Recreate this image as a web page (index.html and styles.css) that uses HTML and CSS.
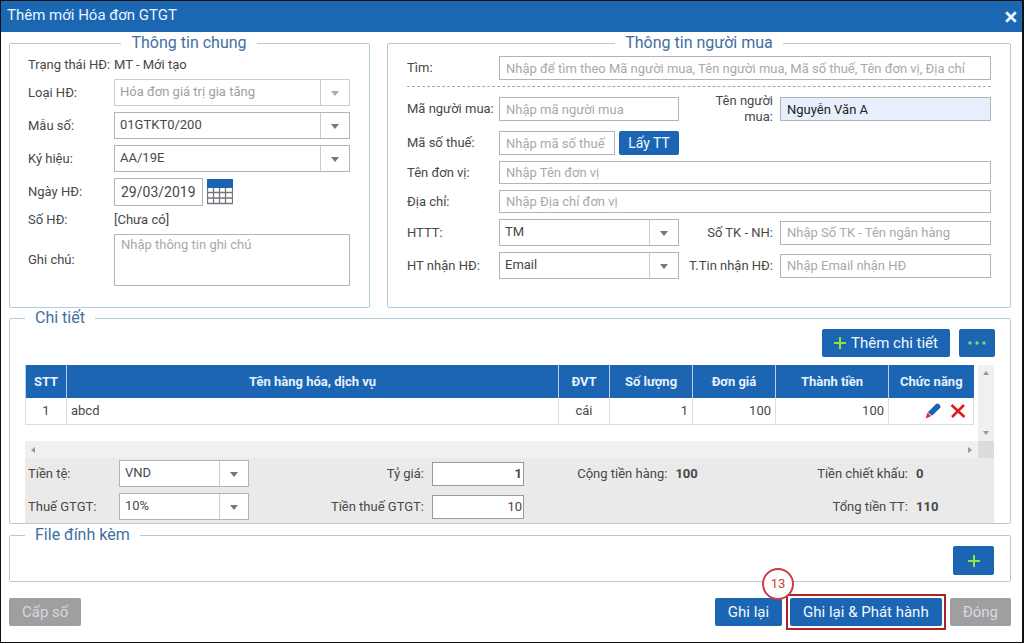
FILE: index.html
```html
<!DOCTYPE html>
<html lang="vi">
<head>
<meta charset="utf-8">
<meta name="viewport" content="width=device-width, initial-scale=1">
<title>Thêm mới Hóa đơn GTGT</title>
<link rel="stylesheet" href="styles.css">
</head>
<body>
<main class="dialog">
  <header class="titlebar">
    <h1 class="title">Thêm mới Hóa đơn GTGT</h1>
    <button class="close" type="button" aria-label="Đóng cửa sổ">
      <svg width="12" height="12" viewBox="0 0 12 12"><path d="M1.200 1.200L10.800 10.800M10.800 1.200L1.200 10.800" stroke="currentColor" stroke-width="2.800"/></svg>
    </button>
  </header>

  <form class="content">
    <div class="panels">
      <fieldset class="panel general">
        <legend class="legend centered">Thông tin chung</legend>
        <div class="general-grid">
          <span class="status">Trạng thái HĐ:</span><span class="status">MT - Mới tạo</span>
          <label for="kind">Loại HĐ:</label>
          <div class="combo"><select id="kind" disabled><option>Hóa đơn giá trị gia tăng</option></select></div>
          <label for="template">Mẫu số:</label>
          <div class="combo"><select id="template"><option>01GTKT0/200</option></select></div>
          <label for="serial">Ký hiệu:</label>
          <div class="combo"><select id="serial"><option>AA/19E</option></select></div>
          <label for="date">Ngày HĐ:</label>
          <div class="date-row">
            <input class="field date" id="date" type="text" value="29/03/2019">
            <button class="icon-button" type="button" aria-label="Chọn ngày">
              <svg width="26" height="26" viewBox="0 0 26 26"><path fill="#fff" d="M.5 .5h25v24H.5z"/><path d="M.5 8v16.500h25V8M6.500 8v16.500M12.500 8v16.500M18.500 8v16.500M0 13.500h26M0 19h26" fill="none" stroke="#75757f" stroke-width="1.300"/><path fill="#1b65b0" d="M0 0h26v9H0z"/></svg>
            </button>
          </div>
          <span>Số HĐ:</span><span>[Chưa có]</span>
          <label for="note">Ghi chú:</label>
          <textarea class="field note" id="note" placeholder="Nhập thông tin ghi chú"></textarea>
        </div>
      </fieldset>

      <fieldset class="panel buyer">
        <legend class="legend centered">Thông tin người mua</legend>
        <div class="buyer-grid">
          <label for="search">Tìm:</label>
          <input class="field wide" id="search" type="text" placeholder="Nhập để tìm theo Mã người mua, Tên người mua, Mã số thuế, Tên đơn vị, Địa chỉ">
          <div class="divider"></div>
          <label for="code">Mã người mua:</label>
          <input class="field" id="code" type="text" placeholder="Nhập mã người mua">
          <label class="end wrap" for="name">Tên người mua:</label>
          <input class="field filled" id="name" type="text" value="Nguyễn Văn A">
          <label for="tax">Mã số thuế:</label>
          <div class="tax-row">
            <input class="field" id="tax" type="text" placeholder="Nhập mã số thuế">
            <button class="button small" type="button">Lấy TT</button>
          </div>
          <label class="first" for="unit">Tên đơn vị:</label>
          <input class="field wide low" id="unit" type="text" placeholder="Nhập Tên đơn vị">
          <label for="address">Địa chỉ:</label>
          <input class="field wide low" id="address" type="text" placeholder="Nhập Địa chỉ đơn vị">
          <label for="pay">HTTT:</label>
          <div class="combo"><select id="pay"><option>TM</option></select></div>
          <label class="end" for="bank">Số TK - NH:</label>
          <input class="field" id="bank" type="text" placeholder="Nhập Số TK - Tên ngân hàng">
          <label for="receive">HT nhận HĐ:</label>
          <div class="combo"><select id="receive"><option>Email</option></select></div>
          <label class="end" for="mail">T.Tin nhận HĐ:</label>
          <input class="field" id="mail" type="text" placeholder="Nhập Email nhận HĐ">
        </div>
      </fieldset>
    </div>

    <fieldset class="panel details">
      <legend class="legend">Chi tiết</legend>
      <div class="toolbar">
        <button class="button add" type="button">
          <svg width="12" height="12" viewBox="0 0 12 12"><path d="M6 0v12M0 6h12" stroke="#8ee63c" stroke-width="2"/></svg>
          Thêm chi tiết
        </button>
        <button class="button more" type="button" aria-label="Thêm tùy chọn">
          <svg width="18" height="4" viewBox="0 0 18 4"><g fill="#7fdc5a"><circle cx="2" cy="2" r="1.700"/><circle cx="9" cy="2" r="1.700"/><circle cx="16" cy="2" r="1.700"/></g></svg>
        </button>
      </div>
      <div class="grid-view">
        <div class="grid-body">
          <table class="items">
            <colgroup><col class="c-no"><col><col class="c-unit"><col class="c-qty"><col class="c-price"><col class="c-total"><col class="c-act"></colgroup>
            <thead>
              <tr><th>STT</th><th>Tên hàng hóa, dịch vụ</th><th>ĐVT</th><th>Số lượng</th><th>Đơn giá</th><th>Thành tiền</th><th>Chức năng</th></tr>
            </thead>
            <tbody>
              <tr>
                <td class="mid">1</td><td>abcd</td><td class="mid">cái</td><td class="num">1</td><td class="num">100</td><td class="num">100</td>
                <td><div class="actions">
                  <button class="icon-button" type="button" aria-label="Sửa"><svg width="16" height="16" viewBox="0 0 16 16"><path fill="#1b62b4" d="M10.800 1.200Q12.300 0 14 1.200T15.600 4.600L7 12.800 2.800 9.200z"/><path fill="#e8a0a0" d="M2.800 9.200L7 12.800 3.500 14z"/><path fill="#dc2a3c" d="M2.300 9.800L5.800 13.200 .6 15.600z"/></svg></button>
                  <button class="icon-button" type="button" aria-label="Xóa"><svg width="16" height="14" viewBox="0 0 16 14"><path d="M1.500 1L14.500 13M14 1L2 13" stroke="#e01b1b" stroke-width="2.500"/></svg></button>
                </div></td>
              </tr>
            </tbody>
          </table>
        </div>
        <div class="bar vertical">
          <svg width="6" height="4" viewBox="0 0 6 4"><path fill="#999" d="M3 0l3 4H0z"/></svg>
          <svg width="6" height="4" viewBox="0 0 6 4"><path fill="#999" d="M0 0h6L3 4z"/></svg>
        </div>
        <div class="bar horizontal">
          <svg width="4" height="6" viewBox="0 0 4 6"><path fill="#999" d="M4 0v6L0 3z"/></svg>
          <svg width="4" height="6" viewBox="0 0 4 6"><path fill="#999" d="M0 0l4 3-4 3z"/></svg>
        </div>
        <div class="corner"></div>
      </div>
      <div class="summary">
        <label for="currency">Tiền tệ:</label>
        <div class="combo"><select id="currency"><option>VND</option></select></div>
        <label class="end" for="rate">Tỷ giá:</label>
        <input class="field amount strong" id="rate" type="text" value="1">
        <span class="end">Cộng tiền hàng:</span><b>100</b>
        <span class="end">Tiền chiết khấu:</span><b>0</b>
        <label for="vat">Thuế GTGT:</label>
        <div class="combo"><select id="vat"><option>10%</option></select></div>
        <label class="end" for="vat-amount">Tiền thuế GTGT:</label>
        <input class="field amount" id="vat-amount" type="text" value="10">
        <span class="end grand">Tổng tiền TT:</span><b>110</b>
      </div>
    </fieldset>

    <fieldset class="panel files">
      <legend class="legend">File đính kèm</legend>
      <div class="file-row">
        <button class="button attach" type="button" aria-label="Thêm file">
          <svg width="12" height="12" viewBox="0 0 12 12"><path d="M6 0v12M0 6h12" stroke="#8ee63c" stroke-width="2"/></svg>
        </button>
      </div>
    </fieldset>

    <footer class="footer">
      <button class="button muted issue" type="button" disabled>Cấp số</button>
      <button class="button save" type="button">Ghi lại</button>
      <div class="marked">
        <button class="button publish" type="button">Ghi lại &amp; Phát hành</button>
        <span class="step">13</span>
      </div>
      <button class="button muted" type="button">Đóng</button>
    </footer>
  </form>
</main>
</body>
</html>
```
FILE: styles.css
```css
* { box-sizing: border-box; }

body {
  margin: 0;
  background: #fff;
  color: #484848;
  font: 13px/16px Roboto, "Liberation Sans", Arial, sans-serif;
}

button, input, select, textarea { font: inherit; color: inherit; margin: 0; }
svg { display: block; }

.dialog {
  min-height: 100vh;
  border: 1px solid #101010;
  border-right-width: 2px;
}

.titlebar {
  display: flex;
  align-items: center;
  justify-content: space-between;
  height: 31px;
  padding: 0 5px 0 6px;
  background: #1b67b2;
  color: #eaf4ff;
}
.title { margin: 0 0 4px; font-size: 15px; line-height: 20px; font-weight: 400; }
.close { padding: 0; border: 0; background: none; color: #e8f6ff; }

.content { padding: 1px 11px 16px 8px; }

.panels { display: grid; grid-template-columns: 361fr 624fr; gap: 17px; }

.panel {
  min-width: 0;
  margin: 0;
  padding: 0 19px;
  border: 1px solid #b0cbdc;
  border-radius: 2px;
}
.legend {
  padding: 0 10px;
  color: #3f6f9f;
  font-size: 16px;
  line-height: 20px;
}
.legend.centered { margin: 0 auto; }

.general { padding: 3px 19px 21px 18px; }
.general-grid {
  display: grid;
  grid-template-columns: 86px minmax(0, 1fr);
  gap: 6px 0;
  align-items: center;
}
.date-row, .tax-row { display: flex; gap: 4px; align-items: center; }

.field {
  display: block;
  width: 100%;
  height: 24px;
  padding: 0 6px;
  border: 1px solid #b4b4b4;
  border-radius: 0;
  background: #fff;
}
.field::placeholder { color: #a9a9a9; opacity: 1; }
.field.low { height: 23px; }
.field.date { width: 89px; height: 28px; font-size: 14px; }
.field.note { height: 52px; padding: 2px 6px; resize: none; }
.field.filled { background: #e8effc; color: #222; }
.icon-button { padding: 0; border: 0; background: none; }

.combo { position: relative; }
.combo select {
  display: block;
  appearance: none;
  width: 100%;
  height: 27px;
  padding: 0 34px 2px 5px;
  border: 1px solid #b4b4b4;
  border-radius: 0;
  background: linear-gradient(#ccc, #ccc) right 28px top / 1px 100% no-repeat #fff;
}
.combo select:disabled { color: #a0a0a0; border-color: #ccc; opacity: 1; }
.combo::after {
  content: "";
  position: absolute;
  top: 12px;
  right: 11px;
  border: 4px solid transparent;
  border-top: 5px solid #777;
  border-bottom: 0;
  pointer-events: none;
}
.combo:has(:disabled)::after { border-top-color: #aaa; }

.buyer { padding: 3px 19px 21px; }
.buyer-grid {
  display: grid;
  grid-template-columns: 92px minmax(0, 180fr) 101px minmax(0, 211fr);
  gap: 6px 0;
  align-items: center;
}
.wide { grid-column: 2 / -1; }
.divider { grid-column: 1 / -1; border-top: 1px dashed #a8a8a8; }
.end { text-align: right; padding-right: 7px; }
.wrap { padding-left: 16px; }
.first { grid-column: 1; }

.button {
  display: flex;
  align-items: center;
  justify-content: center;
  gap: 5px;
  height: 28px;
  padding: 0 13px;
  border: 0;
  border-radius: 2px;
  background: #1b65b2;
  color: #f2f8ff;
  font-size: 15px;
  white-space: nowrap;
}
.button.small { flex: none; width: 60px; height: 24px; padding: 0; font-size: 14px; }
.button.add { padding: 0 12px; }
.button.more { padding: 0 9px; }

.details { padding: 1px 16px 0 15px; }
.toolbar { display: flex; justify-content: flex-end; gap: 9px; margin-bottom: 8px; margin-right: -1px; }

.grid-view { display: grid; grid-template-columns: minmax(0, 1fr) 16px; }
.grid-body { height: 76px; padding-right: 4px; }
.items { width: 100%; table-layout: fixed; border-collapse: collapse; }
.items th {
  height: 33px;
  padding: 0;
  border-left: 1px solid #b9d0e8;
  background: #1b65b2;
  color: #e6f1fc;
}
.items td { height: 26px; padding: 0 4px; border: 1px solid #ddd; border-top: 0; }
.items .mid { text-align: center; }
.items .num { text-align: right; }
.c-no { width: 41px; }
.c-unit { width: 51px; }
.c-qty { width: 83px; }
.c-price { width: 83px; }
.c-total { width: 113px; }
.c-act { width: 85px; }
.actions { display: flex; justify-content: flex-end; align-items: center; gap: 9px; padding-right: 3px; }

.bar { display: flex; align-items: center; justify-content: space-between; background: #f0f0f0; }
.bar.vertical { flex-direction: column; padding: 6px 0; }
.bar.horizontal { height: 17px; padding: 0 6px; }
.corner { background: #dcdcdc; }

.summary {
  display: grid;
  grid-template-columns: 91px 130px 183px 92px minmax(0, 151fr) minmax(0, 109fr) minmax(0, 131fr) 78px;
  gap: 6px 0;
  align-items: center;
  padding: 2px 0 3px 3px;
  background: #eaeaea;
}
.summary .end { padding-right: 8px; white-space: nowrap; }
.amount { padding: 0 1px; text-align: right; border-color: #999; }
.strong { font-weight: 700; }
.grand { grid-column: 7; }

.status { line-height: 17px; }

.files { padding: 1px 16px 6px 15px; margin-top: 1px; }
.file-row { display: flex; justify-content: flex-end; }
.button.attach { width: 41px; height: 29px; }

.footer { display: flex; align-items: center; gap: 8px; margin-top: 16px; }
.button.muted { background: #9f9f9f; color: #d6d9e2; }
.issue { margin-right: auto; }
.marked { position: relative; outline: 2px solid #a8242a; outline-offset: 2px; }
.step {
  position: absolute;
  left: -28px;
  top: -30px;
  width: 32px;
  height: 32px;
  border: 2px solid #cc3a44;
  border-radius: 50%;
  background: #fff;
  color: #cc3a44;
  line-height: 28px;
  text-align: center;
}
```
